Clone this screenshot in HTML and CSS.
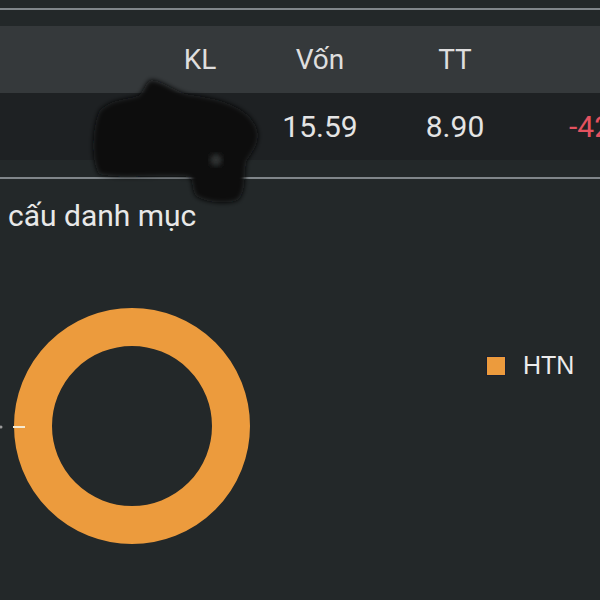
FILE: index.html
```html
<!DOCTYPE html>
<html lang="vi">
<head>
  <meta charset="UTF-8">
  <meta name="viewport" content="width=device-width, initial-scale=1.0">
  <title>Danh mục</title>
  <link rel="stylesheet" href="styles.css">
</head>
<body>
  <div class="rule rule-top"></div>

  <div class="table">
    <div class="row row-head">
      <span></span>
      <span>KL</span>
      <span>Vốn</span>
      <span>TT</span>
      <span class="col-last"></span>
    </div>
    <div class="row row-data">
      <span></span>
      <span></span>
      <span>15.59</span>
      <span>8.90</span>
      <span class="col-last down">-42.91%</span>
    </div>
  </div>

  <div class="rule rule-mid"></div>

  <h2 class="section-title">cấu danh mục</h2>

  <div class="chart">
    <svg class="donut" width="264" height="264" viewBox="0 0 264 264">
      <circle cx="132" cy="132" r="99" fill="none" stroke="#ec9b3d" stroke-width="38"/>
      <circle cx="1" cy="133" r="1.5" fill="#9a9a9a"/>
      <line x1="13" y1="133" x2="25" y2="133" stroke="#f6ead2" stroke-width="2"/>
    </svg>
    <div class="legend">
      <span class="swatch"></span>
      <span class="legend-label">HTN</span>
    </div>
  </div>

  <!-- vết tô che thông tin -->
  <svg class="scribble" width="600" height="600" viewBox="0 0 600 600">
    <defs>
      <filter id="soft"><feGaussianBlur stdDeviation="2.5"/></filter>
    </defs>
    <path filter="url(#soft)" fill="#0b0c0d" d="M152,80 C165,82 175,92 190,95 C215,98 245,105 255,125 C263,140 252,152 246,162 C244,178 246,192 238,200 C225,205 205,202 196,196 C191,188 194,181 189,177 C170,174 120,180 99,174 C91,160 92,130 99,112 C110,98 130,100 140,95 C145,88 147,80 152,80 Z"/>
    <circle filter="url(#soft)" cx="216" cy="160" r="6" fill="#2e3032"/>
  </svg>
</body>
</html>
```

FILE: styles.css
```css
body {
  margin: 0;
  width: 600px;
  height: 600px;
  overflow: hidden;
  position: relative;
  background-color: #232829;
  color: #e4e4e4;
  font-family: Roboto, "Noto Sans", sans-serif;
}
.rule {
  height: 2px;
  background-color: #80868a;
}
.rule-top {
  margin-top: 8px;
}
.table {
  margin-top: 16px;
}
.row {
  display: grid;
  grid-template-columns: 140px 120px 120px 150px 1fr;
  align-items: center;
  height: 67px;
  font-size: 28px;
  text-align: center;
  white-space: nowrap;
}
.row-head {
  background-color: #35393b;
  color: #dedede;
}
.row-data {
  background-color: #1e2123;
  font-size: 30px;
}
.col-last {
  text-align: left;
  padding-left: 39px;
  overflow: hidden;
}
.down {
  color: #e4525f;
}
.rule-mid {
  margin-top: 17px;
}
.section-title {
  margin: 19px 0 0;
  padding-left: 8px;
  font-size: 30px;
  font-weight: normal;
  line-height: 36px;
  color: #e8e8e8;
}
.chart {
  display: flex;
  align-items: flex-start;
  margin-top: 60px;
}
.legend {
  display: flex;
  align-items: center;
  gap: 17px;
  margin-top: 57px;
  margin-left: 222px;
}
.swatch {
  width: 18px;
  height: 18px;
  background-color: #ec9b3d;
  border: 1px solid #1b2131;
}
.legend-label {
  font-family: "Liberation Sans", Arial, sans-serif;
  font-size: 25px;
  color: #ececec;
}
.scribble {
  position: absolute;
  left: 0;
  top: 0;
  pointer-events: none;
}
```
